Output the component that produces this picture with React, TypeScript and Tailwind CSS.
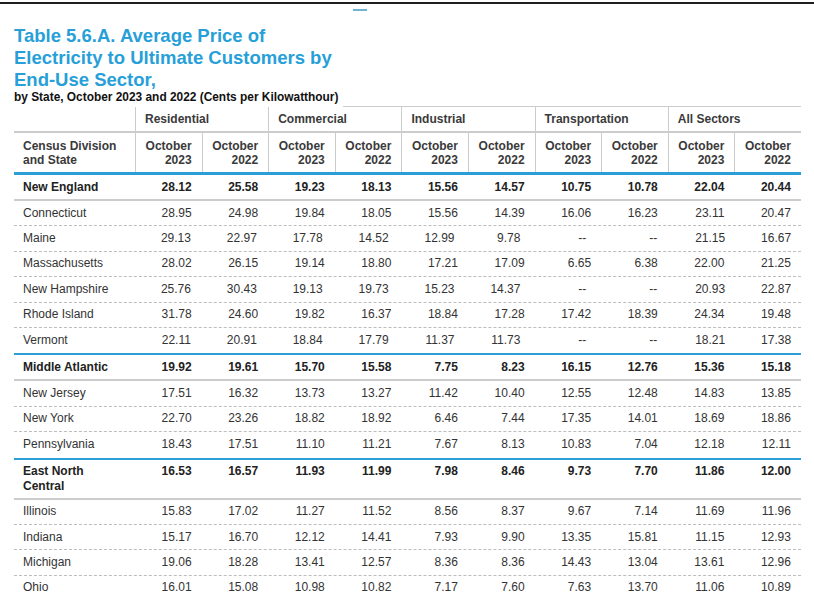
import React from 'react';

type RowData = {
  name: string;
  vals: string[];
  kind: 'region' | 'state';
  first?: boolean;
  last?: boolean;
  tall?: boolean;
};

const groups = ['Residential', 'Commercial', 'Industrial', 'Transportation', 'All Sectors'];

const rows: RowData[] = [
  { name: 'New England', kind: 'region', first: true, vals: ['28.12', '25.58', '19.23', '18.13', '15.56', '14.57', '10.75', '10.78', '22.04', '20.44'] },
  { name: 'Connecticut', kind: 'state', vals: ['28.95', '24.98', '19.84', '18.05', '15.56', '14.39', '16.06', '16.23', '23.11', '20.47'] },
  { name: 'Maine', kind: 'state', vals: ['29.13', '22.97', '17.78', '14.52', '12.99', '9.78', '--', '--', '21.15', '16.67'] },
  { name: 'Massachusetts', kind: 'state', vals: ['28.02', '26.15', '19.14', '18.80', '17.21', '17.09', '6.65', '6.38', '22.00', '21.25'] },
  { name: 'New Hampshire', kind: 'state', vals: ['25.76', '30.43', '19.13', '19.73', '15.23', '14.37', '--', '--', '20.93', '22.87'] },
  { name: 'Rhode Island', kind: 'state', vals: ['31.78', '24.60', '19.82', '16.37', '18.84', '17.28', '17.42', '18.39', '24.34', '19.48'] },
  { name: 'Vermont', kind: 'state', last: true, vals: ['22.11', '20.91', '18.84', '17.79', '11.37', '11.73', '--', '--', '18.21', '17.38'] },
  { name: 'Middle Atlantic', kind: 'region', vals: ['19.92', '19.61', '15.70', '15.58', '7.75', '8.23', '16.15', '12.76', '15.36', '15.18'] },
  { name: 'New Jersey', kind: 'state', vals: ['17.51', '16.32', '13.73', '13.27', '11.42', '10.40', '12.55', '12.48', '14.83', '13.85'] },
  { name: 'New York', kind: 'state', vals: ['22.70', '23.26', '18.82', '18.92', '6.46', '7.44', '17.35', '14.01', '18.69', '18.86'] },
  { name: 'Pennsylvania', kind: 'state', last: true, vals: ['18.43', '17.51', '11.10', '11.21', '7.67', '8.13', '10.83', '7.04', '12.18', '12.11'] },
  { name: 'East North\nCentral', kind: 'region', tall: true, vals: ['16.53', '16.57', '11.93', '11.99', '7.98', '8.46', '9.73', '7.70', '11.86', '12.00'] },
  { name: 'Illinois', kind: 'state', vals: ['15.83', '17.02', '11.27', '11.52', '8.56', '8.37', '9.67', '7.14', '11.69', '11.96'] },
  { name: 'Indiana', kind: 'state', vals: ['15.17', '16.70', '12.12', '14.41', '7.93', '9.90', '13.35', '15.81', '11.15', '12.93'] },
  { name: 'Michigan', kind: 'state', vals: ['19.06', '18.28', '13.41', '12.57', '8.36', '8.36', '14.43', '13.04', '13.61', '12.96'] },
  { name: 'Ohio', kind: 'state', vals: ['16.01', '15.08', '10.98', '10.82', '7.17', '7.60', '7.63', '13.70', '11.06', '10.89'] },
];

const DataRow: React.FC<{ row: RowData }> = ({ row }) => {
  const isRegion = row.kind === 'region';

  let rowClass = 'flex leading-[15px] text-[12px] ';
  if (isRegion) {
    rowClass += 'font-bold text-[#222] border-b-2 border-[#cccccc] ';
    if (!row.first) rowClass += 'border-t-2 border-t-[#2b9ed6] ';
    if (row.tall) rowClass += 'h-[42px] items-start pt-[4px] ';
    else if (row.first) rowClass += 'h-[26px] items-center ';
    else rowClass += 'h-[28px] items-center ';
  } else {
    rowClass += 'text-[#333] h-[25.4px] items-center ';
    if (!row.last) rowClass += 'border-b border-dashed border-[#bdbdbd] ';
  }

  return (
    <div className={rowClass}>
      <div className="w-[121px] shrink-0 pl-[9px] whitespace-pre-line">{row.name}</div>
      {row.vals.map((v, i) => (
        <div
          key={i}
          className={`flex-1 text-right ${v === '--' ? (i % 2 === 0 ? 'pr-[15px]' : 'pr-[12px]') : 'pr-[10px]'}`}
        >
          {v}
        </div>
      ))}
    </div>
  );
};

export default function App() {
  return (
    <div className="w-[814px] h-[600px] overflow-hidden bg-white font-['Liberation_Sans',Arial,sans-serif] text-[#333]">
      <div className="mt-[2px] h-[2px] bg-[#1e1e1e]" />
      <div className="ml-[353px] mt-[5px] h-[2px] w-[14px] bg-[#6fb3d2]" />

      <div className="pl-[14px] pr-[13px]">
        <h1 className="mt-[14px] text-[18.5px] leading-[22px] font-bold text-[#279fd8]">
          Table 5.6.A. Average Price of
          <br />
          Electricity to Ultimate Customers by
          <br />
          End-Use Sector,
        </h1>

        <div className="flex h-[16px]">
          <p className="text-[11.9px] leading-[13px] font-bold text-[#111]">
            by State, October 2023 and 2022 (Cents per Kilowatthour)
          </p>
          <div className="flex-1 ml-[5px] border-b border-[#cccccc]" />
        </div>

        {/* group header */}
        <div className="flex h-[26px] border-b-2 border-[#cccccc] text-[12px] font-bold text-[#3a3a3a]">
          <div className="w-[121px] shrink-0" />
          {groups.map((g) => (
            <div key={g} className="flex-[2] flex items-center pl-[9px] border-l border-[#cccccc]">
              {g}
            </div>
          ))}
        </div>

        {/* sub header */}
        <div className="flex h-[42px] border-b-[3px] border-[#2b9ed6] text-[12px] leading-[14px] font-bold text-[#3a3a3a]">
          <div className="w-[121px] shrink-0 flex items-center pl-[9px]">
            Census Division
            <br />
            and State
          </div>
          {groups.map((g) => (
            <React.Fragment key={g}>
              <div className="flex-1 flex items-center justify-end pr-[10px] text-right border-l border-[#cccccc]">
                October
                <br />
                2023
              </div>
              <div className="flex-1 flex items-center justify-end pr-[10px] text-right border-l border-[#cccccc]">
                October
                <br />
                2022
              </div>
            </React.Fragment>
          ))}
        </div>

        {rows.map((r) => (
          <DataRow key={r.name} row={r} />
        ))}
      </div>
    </div>
  );
}
